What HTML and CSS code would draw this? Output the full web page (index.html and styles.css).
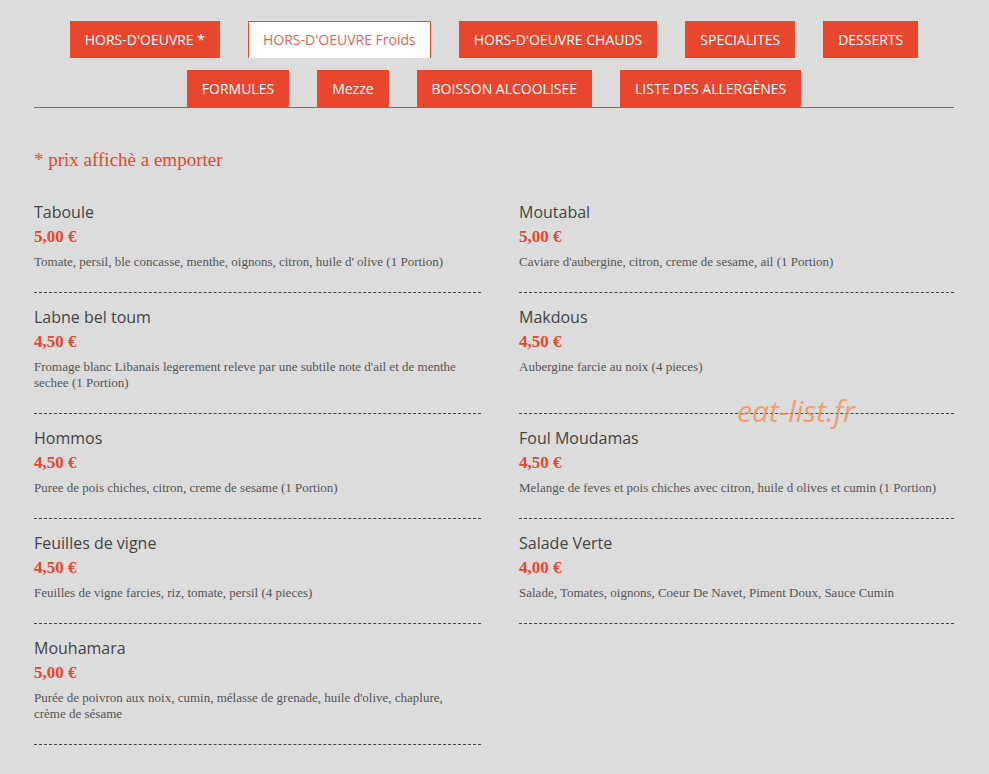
FILE: index.html
```html
<!DOCTYPE html>
<html lang="fr">
<head>
  <meta charset="UTF-8" />
  <meta name="viewport" content="width=device-width, initial-scale=1.0" />
  <title>Carte - Hors-d'oeuvre froids</title>
  <link rel="stylesheet" href="styles.css">
</head>
<body>
  <div class="container">
    <ul class="tabs">
      <li><a href="#">HORS-D'OEUVRE *</a></li>
      <li class="active"><a href="#">HORS-D'OEUVRE Froids</a></li>
      <li><a href="#">HORS-D'OEUVRE CHAUDS</a></li>
      <li><a href="#">SPECIALITES</a></li>
      <li><a href="#">DESSERTS</a></li>
      <li><a href="#">FORMULES</a></li>
      <li><a href="#">Mezze</a></li>
      <li><a href="#">BOISSON ALCOOLISEE</a></li>
      <li><a href="#">LISTE DES ALLERGÈNES</a></li>
    </ul>

    <p class="note">* prix affichè a emporter</p>

    <div class="menu">
      <div class="item">
        <h4>Taboule</h4>
        <span class="price">5,00 €</span>
        <p>Tomate, persil, ble concasse, menthe, oignons, citron, huile d' olive (1 Portion)</p>
      </div>
      <div class="item">
        <h4>Moutabal</h4>
        <span class="price">5,00 €</span>
        <p>Caviare d'aubergine, citron, creme de sesame, ail (1 Portion)</p>
      </div>
      <div class="item">
        <h4>Labne bel toum</h4>
        <span class="price">4,50 €</span>
        <p>Fromage blanc Libanais legerement releve par une subtile note d'ail et de menthe sechee (1 Portion)</p>
      </div>
      <div class="item">
        <h4>Makdous</h4>
        <span class="price">4,50 €</span>
        <p>Aubergine farcie au noix (4 pieces)</p>
      </div>
      <div class="item">
        <h4>Hommos</h4>
        <span class="price">4,50 €</span>
        <p>Puree de pois chiches, citron, creme de sesame (1 Portion)</p>
      </div>
      <div class="item">
        <h4>Foul Moudamas</h4>
        <span class="price">4,50 €</span>
        <p>Melange de feves et pois chiches avec citron, huile d olives et cumin (1 Portion)</p>
      </div>
      <div class="item">
        <h4>Feuilles de vigne</h4>
        <span class="price">4,50 €</span>
        <p>Feuilles de vigne farcies, riz, tomate, persil (4 pieces)</p>
      </div>
      <div class="item">
        <h4>Salade Verte</h4>
        <span class="price">4,00 €</span>
        <p>Salade, Tomates, oignons, Coeur De Navet, Piment Doux, Sauce Cumin</p>
      </div>
      <div class="item">
        <h4>Mouhamara</h4>
        <span class="price">5,00 €</span>
        <p>Purée de poivron aux noix, cumin, mélasse de grenade, huile d'olive, chaplure, crème de sésame</p>
      </div>
    </div>

    <span class="watermark">eat-list.fr</span>
  </div>
</body>
</html>
```

FILE: styles.css
```css
body {
  margin: 0;
  background-color: #dcdcdc;
  font-family: "Open Sans", Arial, sans-serif;
}
.container {
  position: relative;
  width: 920px;
  margin: 0 0 0 34px;
  padding-top: 21px;
  padding-bottom: 40px;
}

/* onglets des categories */
.tabs {
  list-style: none;
  margin: 0;
  padding: 0;
  display: flex;
  flex-wrap: wrap;
  justify-content: center;
  column-gap: 28px;
  row-gap: 12px;
  border-bottom: 1px solid #e8462f;
}
.tabs li a {
  display: block;
  height: 37px;
  line-height: 37px;
  padding: 0 15px;
  background-color: #e8462f;
  color: #fff;
  font-size: 14px;
  text-decoration: none;
}
.tabs li.active a {
  background-color: #fff;
  color: #d9685a;
  border: 1px solid #e8462f;
  border-bottom: none;
  height: 36px;
  line-height: 36px;
  padding: 0 14px;
}

.note {
  margin: 39px 0 0;
  font-family: "Liberation Serif", serif;
  font-size: 19px;
  line-height: 26px;
  color: #e8462f;
}

/* liste des plats */
.menu {
  display: grid;
  grid-template-columns: 447px 435px;
  column-gap: 38px;
  row-gap: 12px;
  margin-top: 27px;
}
.item {
  display: flex;
  flex-direction: column;
  padding-bottom: 22px;
  border-bottom: 1px dashed #444;
}
.item h4 {
  margin: 0;
  font-size: 16px;
  font-weight: normal;
  line-height: 24px;
  color: #444;
}
.price {
  margin-top: 1px;
  font-family: "Liberation Serif", serif;
  font-weight: bold;
  font-size: 17px;
  line-height: 24px;
  color: #e8462f;
}
.item p {
  margin: 5px 0 0;
  padding-right: 18px;
  font-family: "Liberation Serif", serif;
  font-size: 13px;
  line-height: 16px;
  color: #555;
}

.watermark {
  position: absolute;
  left: 703px;
  top: 390px;
  font-size: 30px;
  font-style: italic;
  color: rgba(240, 140, 80, 0.75);
}
```
